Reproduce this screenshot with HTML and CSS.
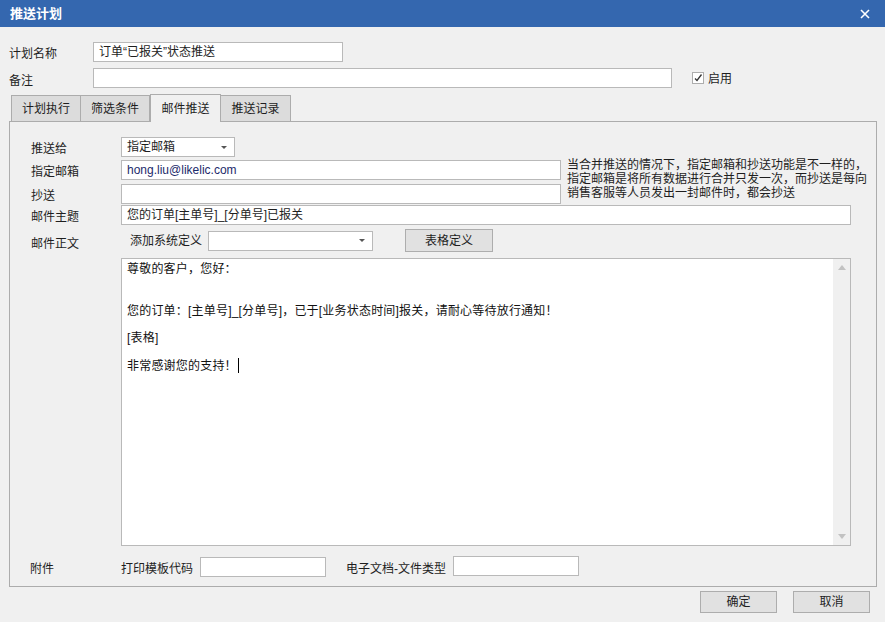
FILE: index.html
```html
<!DOCTYPE html>
<html lang="zh-CN">
<head>
    <meta charset="UTF-8">
    <meta name="viewport" content="width=device-width, initial-scale=1.0">
    <title>推送计划</title>
    <link rel="stylesheet" href="styles.css">
</head>
<body>
    <div class="titlebar">
        <span class="title">推送计划</span>
        <svg class="close" width="10" height="10" viewBox="0 0 10 10">
            <path d="M1 1 L9 9 M9 1 L1 9" stroke="#fff" stroke-width="1.6" fill="none"/>
        </svg>
    </div>

    <div class="main">
        <div class="row plan-name">
            <span class="label">计划名称</span>
            <div class="input w250">订单“已报关”状态推送</div>
        </div>
        <div class="row plan-note">
            <span class="label">备注</span>
            <div class="input w579"></div>
            <svg class="check" width="12" height="12" viewBox="0 0 12 12">
                <rect x="0.5" y="0.5" width="11" height="11" fill="#fff" stroke="#adadad"/>
                <path d="M3 6.5 L5 8.5 L9.5 2.5" stroke="#333" stroke-width="1.3" fill="none"/>
            </svg>
            <span class="check-label">启用</span>
        </div>

        <div class="tabs">
            <div class="tab">计划执行</div>
            <div class="tab">筛选条件</div>
            <div class="tab active">邮件推送</div>
            <div class="tab">推送记录</div>
        </div>

        <div class="panel">
            <div class="prow">
                <span class="plabel">推送给</span>
                <div class="select w114">
                    <span>指定邮箱</span>
                    <span class="arrow"></span>
                </div>
            </div>

            <div class="prow recipients">
                <div class="recipient-fields">
                    <div class="prow">
                        <span class="plabel">指定邮箱</span>
                        <div class="input w440 email">hong.liu@likelic.com</div>
                    </div>
                    <div class="prow cc">
                        <span class="plabel">抄送</span>
                        <div class="input w440"></div>
                    </div>
                </div>
                <div class="hint">
                    当合并推送的情况下，指定邮箱和抄送功能是不一样的，<br>
                    指定邮箱是将所有数据进行合并只发一次，而抄送是每向<br>
                    销售客服等人员发出一封邮件时，都会抄送
                </div>
            </div>

            <div class="prow subject">
                <span class="plabel">邮件主题</span>
                <div class="input w730">您的订单[主单号]_[分单号]已报关</div>
            </div>

            <div class="prow body-row">
                <span class="plabel body-label">邮件正文</span>
                <div class="body-col">
                    <div class="sysdef">
                        <span class="sysdef-label">添加系统定义</span>
                        <div class="select w165"><span></span><span class="arrow"></span></div>
                        <div class="btn table-btn">表格定义</div>
                    </div>
                    <div class="editor">
                        <div class="editor-text">
                            <p>尊敬的客户，您好：</p>
                            <p class="blank"></p>
                            <p>您的订单：[主单号]_[分单号]，已于[业务状态时间]报关，请耐心等待放行通知！</p>
                            <p>[表格]</p>
                            <p>非常感谢您的支持！<span class="caret"></span></p>
                        </div>
                        <div class="scrollbar">
                            <span class="up"></span>
                            <span class="down"></span>
                        </div>
                    </div>
                </div>
            </div>

            <div class="prow attach">
                <span class="plabel">附件</span>
                <span class="attach-label">打印模板代码</span>
                <div class="input w126"></div>
                <span class="attach-label doc">电子文档-文件类型</span>
                <div class="input w126 up1"></div>
            </div>
        </div>

        <div class="actions">
            <div class="btn">确定</div>
            <div class="btn">取消</div>
        </div>
    </div>
</body>
</html>
```

FILE: styles.css
```css
* {
    box-sizing: border-box;
}
body {
    margin: 0;
    background: #f0f0f0;
    font-family: "Liberation Sans", "Noto Sans CJK SC", sans-serif;
    font-size: 12px;
    line-height: 14px;
    color: #1e1e1e;
    width: 885px;
    height: 622px;
    overflow: hidden;
}
p {
    margin: 0;
}

/* window title */
.titlebar {
    height: 27px;
    background: #3467af;
    display: flex;
    align-items: center;
    justify-content: space-between;
    padding: 0 15px 0 10px;
}
.title {
    color: #fff;
    font-weight: bold;
    font-size: 13px;
}

.main {
    padding: 0 8px 0 9px;
}

.row {
    display: flex;
    align-items: center;
}
.label {
    width: 84px;
    padding-top: 4px;
}
.plan-name {
    margin-top: 15px;
}
.plan-note {
    margin-top: 6px;
}
.plan-note .label {
    padding-top: 6px;
}
.check {
    margin-left: 20px;
}
.check-label {
    margin-left: 4px;
    padding-top: 2px;
}

/* inputs */
.input {
    height: 20px;
    background: #fff;
    border: 1px solid #b9b9b9;
    padding: 2px 5px;
    white-space: nowrap;
    overflow: hidden;
}
.w114 { width: 114px; }
.w126 { width: 126px; }
.w165 { width: 165px; }
.w250 { width: 250px; }
.w440 { width: 440px; }
.w579 { width: 579px; }
.w730 { width: 730px; }
.email {
    color: #1c2a6b;
}

.select {
    height: 20px;
    background: #fff;
    border: 1px solid #b9b9b9;
    padding: 2px 5px;
    display: flex;
    justify-content: space-between;
    align-items: center;
}
.arrow {
    width: 0;
    height: 0;
    border-left: 3px solid transparent;
    border-right: 3px solid transparent;
    border-top: 3px solid #555;
    margin-right: 2px;
}

/* tabs */
.tabs {
    display: flex;
    align-items: flex-end;
    margin-top: 6px;
    padding-left: 2px;
    margin-bottom: -1px;
}
.tab {
    height: 26px;
    width: 70px;
    background: #dcdcdc;
    border: 1px solid #acacac;
    border-bottom: none;
    display: flex;
    align-items: center;
    justify-content: center;
    margin-bottom: 1px;
}
.tab + .tab {
    border-left: none;
}
.tab:nth-child(2) {
    width: 69px;
}
.tab.active {
    height: 28px;
    width: 71px;
    background: #f0f0f0;
    border-left: 1px solid #acacac;
    margin-bottom: 0;
    position: relative;
    z-index: 1;
}
.tab.active + .tab {
    border-left: none;
}

/* tab page */
.panel {
    border: 1px solid #acacac;
    height: 466px;
    padding: 15px 0 0 21px;
}
.prow {
    display: flex;
    align-items: center;
}
.plabel {
    width: 90px;
    flex-shrink: 0;
    padding-top: 4px;
}
.recipients {
    margin-top: 3px;
    align-items: flex-start;
}
.cc {
    margin-top: 4px;
}
.hint {
    margin-left: 6px;
    margin-top: -2px;
    white-space: nowrap;
}
.subject {
    margin-top: 1px;
}

.body-row {
    margin-top: 4px;
    align-items: flex-start;
}
.plabel.body-label {
    padding-top: 8px;
}
.sysdef {
    display: flex;
    align-items: center;
    height: 23px;
}
.sysdef-label {
    width: 78px;
    margin-left: 9px;
}

.btn {
    width: 77px;
    height: 22px;
    background: #e1e1e1;
    border: 1px solid #adadad;
    display: flex;
    align-items: center;
    justify-content: center;
}
.sysdef .table-btn {
    margin-left: 32px;
    width: 88px;
    height: 23px;
}

/* mail body editor */
.editor {
    margin-top: 6px;
    width: 730px;
    height: 288px;
    border: 1px solid #b9b9b9;
    background: #fff;
    display: flex;
}
.editor-text {
    flex: 1;
    padding: 3px 5px;
    color: #111;
}
.editor-text p {
    margin-bottom: 13px;
    letter-spacing: 0.2px;
}
.editor-text p.blank {
    min-height: 2px;
}
.caret {
    display: inline-block;
    width: 1px;
    height: 15px;
    background: #000;
    margin-left: 1px;
    vertical-align: -3px;
}
.scrollbar {
    width: 17px;
    background: #f0f0f0;
    display: flex;
    flex-direction: column;
    justify-content: space-between;
    align-items: center;
    padding: 6px 0;
}
.scrollbar .up,
.scrollbar .down {
    width: 0;
    height: 0;
    border-left: 4px solid transparent;
    border-right: 4px solid transparent;
}
.scrollbar .up {
    border-bottom: 5px solid #c2c2c2;
}
.scrollbar .down {
    border-top: 5px solid #c2c2c2;
}

/* attachments */
.attach {
    margin-top: 11px;
}
.attach .plabel {
    margin-left: -1px;
    width: 91px;
}
.attach-label {
    margin-right: 7px;
    padding-top: 3px;
}
.attach-label.doc {
    margin-left: 20px;
}
.up1 {
    margin-top: -2px;
}

.actions {
    display: flex;
    justify-content: flex-end;
    gap: 16px;
    margin-top: 4px;
    padding-right: 7px;
}
```
